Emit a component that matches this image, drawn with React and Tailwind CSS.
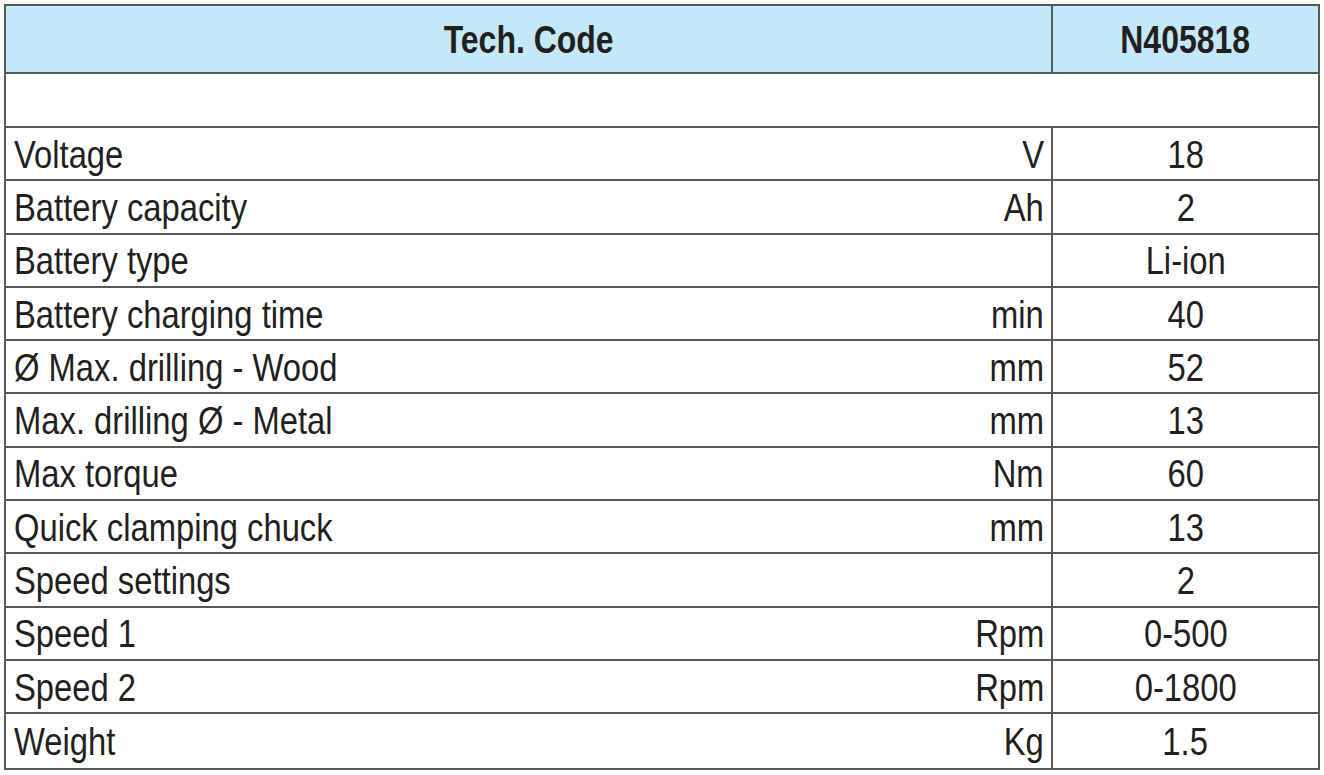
const rows = [
  ["Voltage", "V", "18"],
  ["Battery capacity", "Ah", "2"],
  ["Battery type", "", "Li-ion"],
  ["Battery charging time", "min", "40"],
  ["Ø Max. drilling - Wood", "mm", "52"],
  ["Max. drilling Ø - Metal", "mm", "13"],
  ["Max torque", "Nm", "60"],
  ["Quick clamping chuck", "mm", "13"],
  ["Speed settings", "", "2"],
  ["Speed 1", "Rpm", "0-500"],
  ["Speed 2", "Rpm", "0-1800"],
  ["Weight", "Kg", "1.5"],
];

// Arial Narrow look: Liberation Sans squeezed horizontally
const Narrow = ({ origin, children }) => (
  <span className={`inline-block scale-x-[0.84] ${origin}`}>{children}</span>
);

export default function App() {
  return (
    <div className="w-[1324px] h-[775px] bg-white pt-[4px] pl-[4px] text-[#231f20] leading-none" style={{ fontFamily: '"Liberation Sans", Arial, sans-serif' }}>
      <div className="w-[1316px] border-2 border-[#595959]">
        {/* header */}
        <div className="grid grid-cols-[1047px_1fr] h-[68px] bg-[#c3e9f9] border-b-2 border-[#595959] text-[39px] font-bold">
          <div className="flex items-center justify-center border-r-2 border-[#595959]">
            <span className="inline-block scale-x-[0.82] origin-center">Tech. Code</span>
          </div>
          <div className="flex items-center justify-center">
            <span className="inline-block scale-x-[0.82] origin-center">N405818</span>
          </div>
        </div>
        {/* empty spacer row */}
        <div className="h-[54px] border-b-2 border-[#595959]"></div>
        {rows.map(([label, unit, value], i) => (
          <div
            key={label}
            className={`grid grid-cols-[1047px_1fr] h-[53.3px] text-[39px] ${i < rows.length - 1 ? "border-b-2 border-[#595959]" : ""}`}
          >
            <div className="flex items-center justify-between border-r-2 border-[#595959] pl-[8px] pr-[7px] pt-[1px]">
              <Narrow origin="origin-left">{label}</Narrow>
              <Narrow origin="origin-right">{unit}</Narrow>
            </div>
            <div className="flex items-center justify-center pt-[1px]">
              <Narrow origin="origin-center">{value}</Narrow>
            </div>
          </div>
        ))}
      </div>
    </div>
  );
}
